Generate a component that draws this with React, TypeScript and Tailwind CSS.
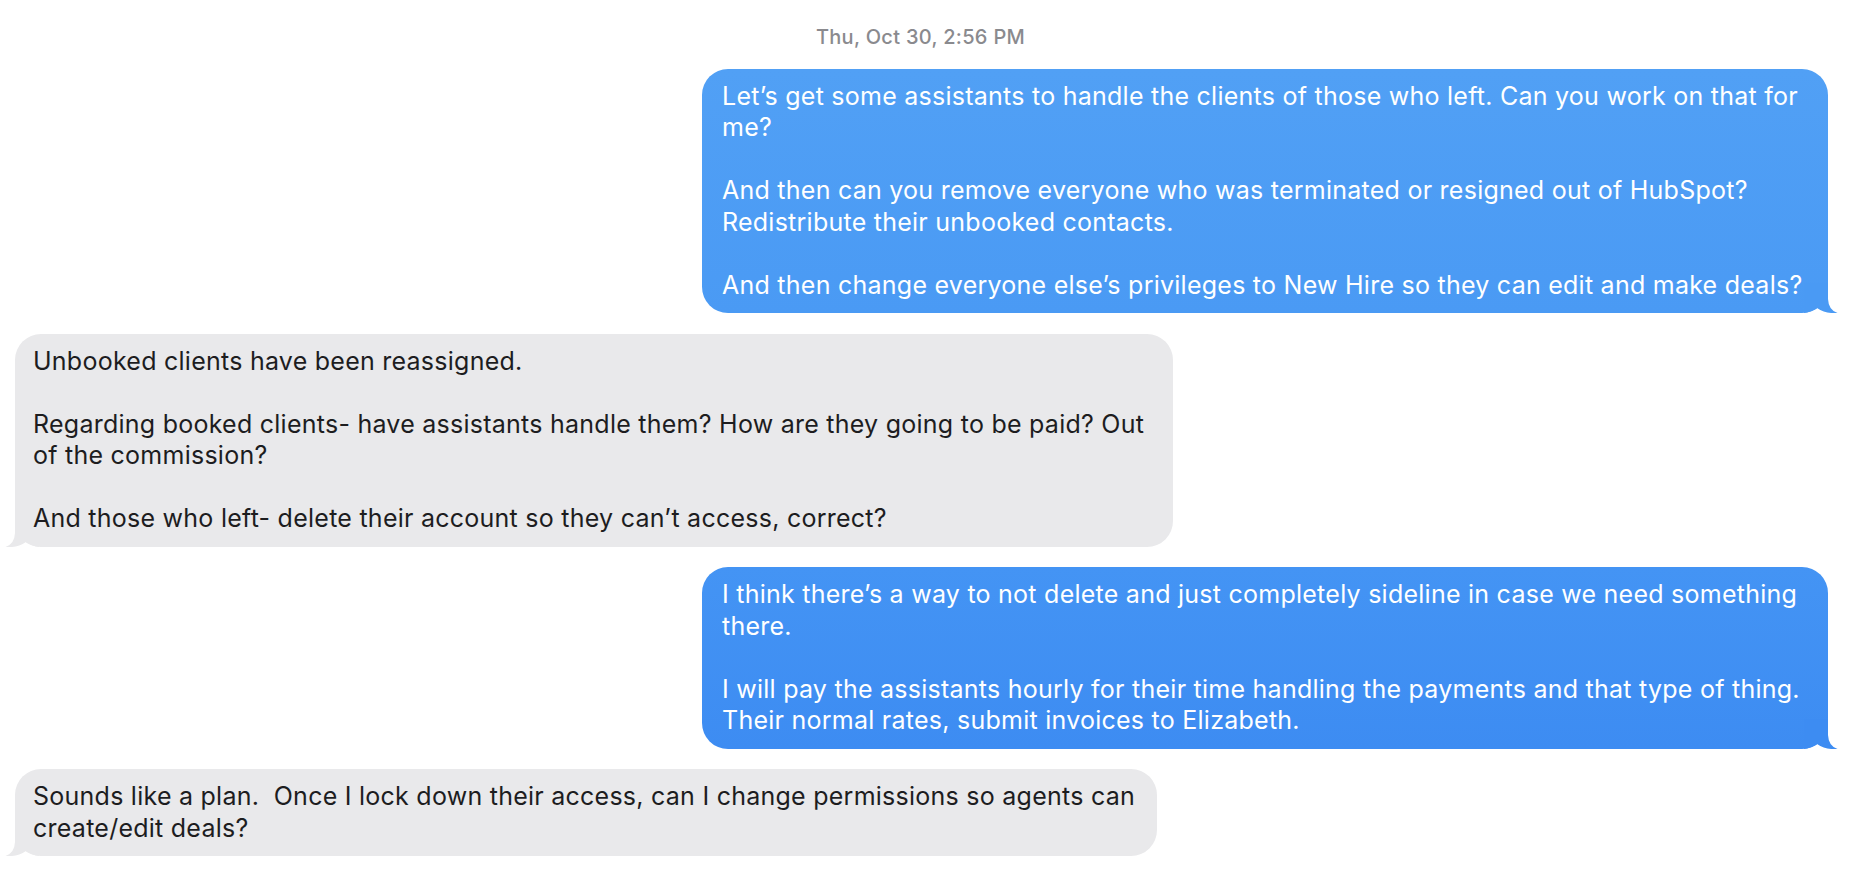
import React from "react";

type Msg = {
  from: "me" | "them";
  lines: string[];
};

const MESSAGES: Msg[] = [
  {
    from: "me",
    lines: [
      "Let\u2019s get some assistants to handle the clients of those who left. Can you work on that for",
      "me?",
      "",
      "And then can you remove everyone who was terminated or resigned out of HubSpot?",
      "Redistribute their unbooked contacts.",
      "",
      "And then change everyone else\u2019s privileges to New Hire so they can edit and make deals?",
    ],
  },
  {
    from: "them",
    lines: [
      "Unbooked clients have been reassigned.",
      "",
      "Regarding booked clients- have assistants handle them? How are they going to be paid? Out",
      "of the commission?",
      "",
      "And those who left- delete their account so they can\u2019t access, correct?",
    ],
  },
  {
    from: "me",
    lines: [
      "I think there\u2019s a way to not delete and just completely sideline in case we need something",
      "there.",
      "",
      "I will pay the assistants hourly for their time handling the payments and that type of thing.",
      "Their normal rates, submit invoices to Elizabeth.",
    ],
  },
  {
    from: "them",
    lines: [
      "Sounds like a plan.\u00a0 Once I lock down their access, can I change permissions so agents can",
      "create/edit deals?",
    ],
  },
];

// per-bubble look, index matched to MESSAGES
const BUBBLE_CLASS = [
  "w-[1126px] pl-5 bg-linear-to-b from-[#51a0f5] to-[#4a9af4] text-white",
  "w-[1158px] pl-[18px] bg-[#e9e9eb] text-[#1d1d1f]",
  "w-[1126px] pl-5 bg-linear-to-b from-[#4494f4] to-[#3d8cf2] text-white",
  "w-[1142px] pl-[18px] bg-[#e9e9eb] text-[#1d1d1f]",
];

const TAIL_COLOR = ["#4a9af4", "#e9e9eb", "#3d8cf2", "#e9e9eb"];

function Tail({ color, side }: { color: string; side: "me" | "them" }) {
  return (
    <svg
      width="34"
      height="30"
      viewBox="0 0 34 30"
      className={
        side === "me"
          ? "absolute right-[-10px] bottom-0"
          : "absolute left-[-10px] bottom-0 -scale-x-100"
      }
    >
      <path
        d="M 24 0 L 24 16 Q 24.5 27 33.5 30 Q 22 31 13 25 Q 8 29 0 30 L 0 0 Z"
        fill={color}
      />
    </svg>
  );
}

function Bubble({ msg, index }: { msg: Msg; index: number }) {
  const isMe = msg.from === "me";
  return (
    <div className={isMe ? "flex justify-end pr-8" : "flex justify-start pl-[15px]"}>
      <div
        className={`relative rounded-[26px] pr-4 py-3 text-[25px] leading-[31.5px] tracking-[0.25px] ${BUBBLE_CLASS[index]}`}
      >
        <Tail color={TAIL_COLOR[index]} side={msg.from} />
        <div className="relative">
          {msg.lines.map((line, i) => (
            <div key={i} className="whitespace-pre h-[31.5px]">
              {line}
            </div>
          ))}
        </div>
      </div>
    </div>
  );
}

export default function App() {
  return (
    <div className="w-[1860px] h-[880px] bg-white overflow-hidden font-['Inter','Noto_Sans',sans-serif] antialiased">
      <div className="pt-[25px] pr-[19px] flex justify-center">
        <span className="text-[20px] leading-6 font-medium tracking-[0.3px] text-[#8a8a8e]">
          Thu, Oct 30, 2:56 PM
        </span>
      </div>
      <div className="mt-[19.5px] flex flex-col gap-[20.5px]">
        {MESSAGES.map((m, i) => (
          <Bubble key={i} msg={m} index={i} />
        ))}
      </div>
    </div>
  );
}
